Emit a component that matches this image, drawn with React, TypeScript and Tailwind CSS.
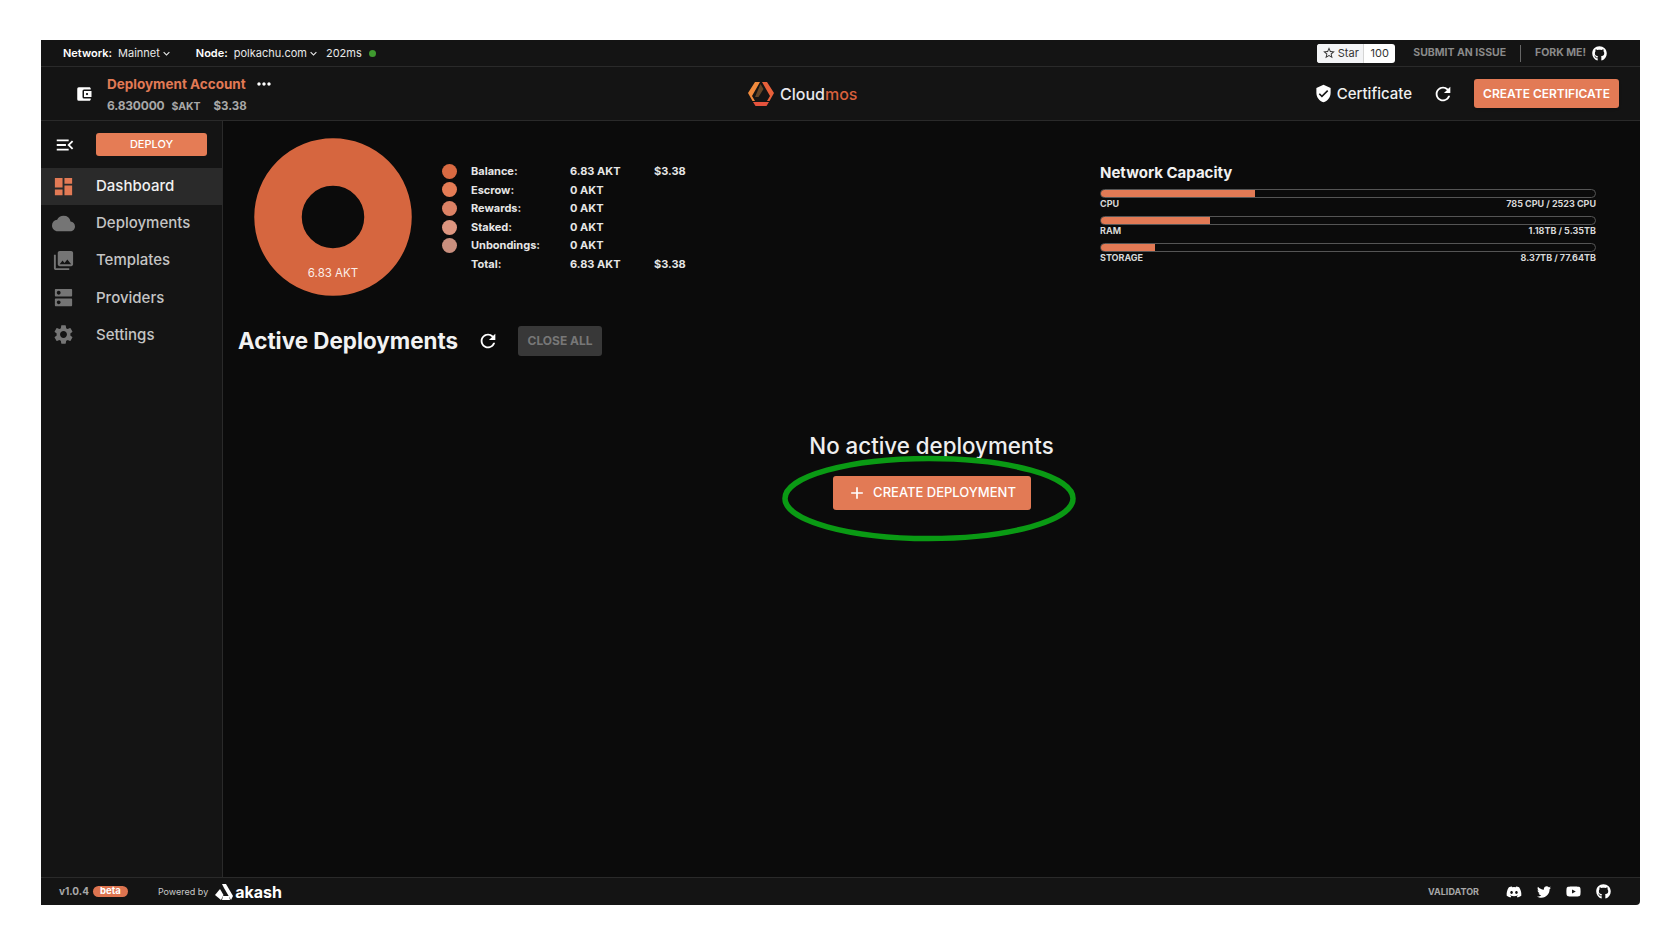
import {
  MdDashboard,
  MdCloud,
  MdCollections,
  MdDns,
  MdSettings,
  MdMenuOpen,
  MdAccountBalanceWallet,
  MdRefresh,
  MdVerifiedUser,
  MdAdd,
  MdMoreHoriz,
  MdStarBorder,
  MdKeyboardArrowDown,
} from "react-icons/md";
import { FaDiscord, FaTwitter, FaYoutube, FaGithub } from "react-icons/fa";

const navItems = [
  { label: "Dashboard", Icon: MdDashboard, active: true },
  { label: "Deployments", Icon: MdCloud },
  { label: "Templates", Icon: MdCollections },
  { label: "Providers", Icon: MdDns },
  { label: "Settings", Icon: MdSettings },
];

const legend = [
  { label: "Balance:", value: "6.83 AKT", usd: "$3.38", dot: "bg-[#d96a42]" },
  { label: "Escrow:", value: "0 AKT", dot: "bg-[#e57c55]" },
  { label: "Rewards:", value: "0 AKT", dot: "bg-[#dc8265]" },
  { label: "Staked:", value: "0 AKT", dot: "bg-[#de9680]" },
  { label: "Unbondings:", value: "0 AKT", dot: "bg-[#c98f7e]" },
  { label: "Total:", value: "6.83 AKT", usd: "$3.38", dot: "" },
];

const capacity = [
  { label: "CPU", value: "785 CPU / 2523 CPU", fill: 31.1 },
  { label: "RAM", value: "1.18TB / 5.35TB", fill: 22 },
  { label: "STORAGE", value: "8.37TB / 77.64TB", fill: 11 },
];

function CloudmosLogo() {
  return (
    <svg width="28" height="26" viewBox="0 0 28 26">
      <path d="M8 1h5L5 15l3 5H5.500L1 12z" fill="#f08a3c" />
      <path d="M15 1h5l7 11-4.500 8H20l3-5z" fill="#e8603a" />
      <path d="M13.500 3l3 5-5 8H8z" fill="#f3a04a" opacity="0.35" />
      <path d="M6 21h16l-2.500 4h-11z" fill="#e5533d" />
    </svg>
  );
}

function AkashLogo() {
  return (
    <svg width="18" height="16" viewBox="0 0 18 16">
      <path d="M7 0h4l7 12-2 4-7-12z" fill="#fff" />
      <path d="M5 5l3.500 6-2.500 5-6-5z" fill="#fff" />
      <path d="M8 12h6l1 4H7z" fill="#fff" />
    </svg>
  );
}

function TopBar() {
  return (
    <div className="flex h-[27px] items-center border-b border-[#2a2a2a] bg-[#141414] pl-[22px] pr-[33px] text-[11px] text-[#e8e8e8]">
      <span className="font-semibold text-white">Network:</span>
      <span className="ml-[6px] flex items-center">
        Mainnet
        <MdKeyboardArrowDown className="text-[13px]" />
      </span>
      <span className="ml-[23px] font-semibold text-white">Node:</span>
      <span className="ml-[6px] flex items-center">
        polkachu.com
        <MdKeyboardArrowDown className="text-[13px]" />
      </span>
      <span className="ml-[6px]">202ms</span>
      <span className="ml-[7px] h-[7px] w-[7px] rounded-full bg-[#3f9a2f]" />
      <div className="ml-auto flex items-center">
        <div className="flex h-[19px] w-[78px] items-center rounded-[3px] bg-white text-[11px] text-[#333]">
          <span className="flex h-full w-[47px] items-center justify-center gap-[2px] rounded-l-[3px] border-r border-[#d5d5d5] bg-[#f3f4f6]">
            <MdStarBorder className="text-[14px]" />
            Star
          </span>
          <span className="flex-1 text-center">100</span>
        </div>
        <span className="ml-[18px] text-[10.500px] font-bold text-[#8a8a8a]">SUBMIT AN ISSUE</span>
        <span className="ml-[14px] h-[17px] w-px bg-[#666]" />
        <span className="ml-[14px] text-[10.500px] font-bold text-[#8a8a8a]">FORK ME!</span>
        <FaGithub className="ml-[6px] text-[15px] text-white" />
      </div>
    </div>
  );
}

function AccountBar() {
  return (
    <div className="flex h-[54px] items-center border-b border-[#2a2a2a] bg-[#141414] pr-[21px]">
      <div className="flex w-[706px] items-center pl-[34px]">
        <MdAccountBalanceWallet className="text-[18px] text-white" />
        <div className="ml-[14px] pt-[3px]">
          <div className="flex h-[18px] items-center">
            <span className="text-[13.500px] font-bold text-[#e27a55]">Deployment Account</span>
            <MdMoreHoriz className="ml-[8px] text-[20px] text-white" />
          </div>
          <div className="mt-[4px] flex items-baseline font-bold text-[#a8a8a8]">
            <span className="text-[12px] tracking-[-0.2px]">6.830000</span>
            <span className="ml-[7px] text-[10.500px]">$AKT</span>
            <span className="ml-[13px] text-[11.500px]">$3.38</span>
          </div>
        </div>
      </div>
      <div className="flex items-center gap-[5px]">
        <CloudmosLogo />
        <span className="text-[16px] font-medium text-[#e8e8ee]">
          Cloud<span className="text-[#d9603c]">mos</span>
        </span>
      </div>
      <div className="ml-auto flex items-center">
        <MdVerifiedUser className="text-[19px] text-white" />
        <span className="ml-[4px] pt-[1px] text-[15px] font-medium text-[#f0f0f0]">Certificate</span>
        <MdRefresh className="ml-[20px] text-[22px] text-white" />
        <button className="ml-[20px] h-[29px] w-[145px] rounded-[3px] bg-[#e27a55] text-[12px] font-semibold text-white shadow">
          CREATE CERTIFICATE
        </button>
      </div>
    </div>
  );
}

function Sidebar() {
  return (
    <aside className="w-[182px] shrink-0 border-r border-[#2a2a2a] bg-[#141414]">
      <div className="flex h-[47px] items-center pl-[13px]">
        <MdMenuOpen className="text-[22px] text-white" />
        <button className="ml-[20px] h-[23px] w-[111px] rounded-[3px] bg-[#e57c55] text-[11px] font-medium text-white">
          DEPLOY
        </button>
      </div>
      {navItems.map(({ label, Icon, active }) => (
        <div
          key={label}
          className={`flex h-[37.100px] items-center pl-[10px] ${active ? "bg-[#2a2a2a]" : ""}`}
        >
          <span className="flex w-[24px] justify-center">
            <Icon className={`text-[23px] ${active ? "text-[#e27a55]" : "text-[#757575]"}`} />
          </span>
          <span className={`ml-[21px] text-[15px] font-medium ${active ? "text-[#f0f0f0]" : "text-[#c4c4c4]"}`}>
            {label}
          </span>
        </div>
      ))}
    </aside>
  );
}

function Summary() {
  return (
    <div className="flex h-[183px]">
      <svg width="158" height="158" viewBox="0 0 158 158" className="ml-[31px] mt-[17px] shrink-0">
        <circle cx="79" cy="79" r="55" fill="none" stroke="#d6663f" strokeWidth="47.500" />
        <text x="79" y="139" textAnchor="middle" fontSize="11.500" fill="#fbeee8" fontFamily="Inter, sans-serif">
          6.83 AKT
        </text>
      </svg>
      <div className="ml-[30px] mt-[41px] w-[260px] text-[11px] font-bold text-[#e6e6e6]">
        {legend.map((row) => (
          <div key={row.label} className="flex h-[18.600px] items-center">
            <span className={`h-[15px] w-[15px] rounded-full ${row.dot}`} />
            <span className="ml-[14px] w-[99px]">{row.label}</span>
            <span className="w-[84px]">{row.value}</span>
            <span>{row.usd}</span>
          </div>
        ))}
      </div>
      <div className="ml-[398px] mt-[43px] w-[496px]">
        <h3 className="text-[15px] font-bold leading-[18px] text-[#f0f0f0]">Network Capacity</h3>
        <div className="mt-[7px] flex flex-col gap-[7px]">
          {capacity.map((c) => (
            <div key={c.label}>
              <div className="h-[9px] overflow-hidden rounded-full border border-[#555] bg-[#0b0b0b]">
                <div className="h-full bg-[#e27a55]" style={{ width: `${c.fill}%` }} />
              </div>
              <div className="mt-[1px] flex justify-between text-[9px] font-bold leading-[10px] text-[#d8d8d8]">
                <span>{c.label}</span>
                <span>{c.value}</span>
              </div>
            </div>
          ))}
        </div>
      </div>
    </div>
  );
}

function Main() {
  return (
    <main className="relative flex-1 bg-[#0b0b0b]">
      <Summary />
      <div className="ml-[15px] mt-[20px] flex items-center">
        <h1 className="text-[22.400px] font-bold text-[#f2f2f2]">Active Deployments</h1>
        <MdRefresh className="ml-[19px] text-[22px] text-white" />
        <button className="ml-[19px] h-[30px] w-[84px] rounded-[3px] bg-[#383838] text-[12px] font-bold text-[#777]">
          CLOSE ALL
        </button>
      </div>
      <div className="mt-[74px] flex flex-col items-center">
        <p className="text-[22.300px] font-medium leading-[28px] text-[#efefef]">No active deployments</p>
        <button className="mt-[16px] flex h-[34px] w-[198px] items-center justify-center gap-[6px] rounded-[3px] bg-[#e27a55] text-[13px] font-medium text-white">
          <MdAdd className="text-[20px]" />
          CREATE DEPLOYMENT
        </button>
      </div>
      {/* annotation drawn on top of the screenshot */}
      <svg width="296" height="89" viewBox="0 0 296 89" className="absolute left-[558px] top-[333px]">
        <ellipse cx="148" cy="44.500" rx="144" ry="40" fill="none" stroke="#0a9a14" strokeWidth="5.500" />
      </svg>
    </main>
  );
}

function Footer() {
  return (
    <div className="flex h-[28px] items-center rounded-br-[4px] border-t border-[#2a2a2a] bg-[#141414] pl-[18px] pr-[29px] text-[10px]">
      <span className="font-bold text-[#a8a8a8]">v1.0.4</span>
      <span className="ml-[4px] flex h-[11px] w-[35px] items-center justify-center rounded-full bg-[#dd7450] text-[9.500px] font-bold text-white">
        beta
      </span>
      <span className="ml-[30px] text-[9px] text-[#c8c8c8]">Powered by</span>
      <span className="ml-[7px]">
        <AkashLogo />
      </span>
      <span className="ml-[2px] text-[16px] font-bold leading-none text-white">akash</span>
      <span className="ml-auto pt-[1px] text-[9px] font-bold text-[#a8a8a8]">VALIDATOR</span>
      <FaDiscord className="ml-[27px] text-[16px] text-white" />
      <FaTwitter className="ml-[15px] text-[14px] text-white" />
      <FaYoutube className="ml-[15px] text-[15px] text-white" />
      <FaGithub className="ml-[15px] text-[15px] text-white" />
    </div>
  );
}

export default function App() {
  return (
    <div className="h-screen w-full bg-white pb-[39px] pl-[41px] pr-[40px] pt-[40px] font-['Inter',sans-serif]">
      <div className="flex h-full flex-col">
        <TopBar />
        <AccountBar />
        <div className="flex min-h-0 flex-1">
          <Sidebar />
          <Main />
        </div>
        <Footer />
      </div>
    </div>
  );
}
